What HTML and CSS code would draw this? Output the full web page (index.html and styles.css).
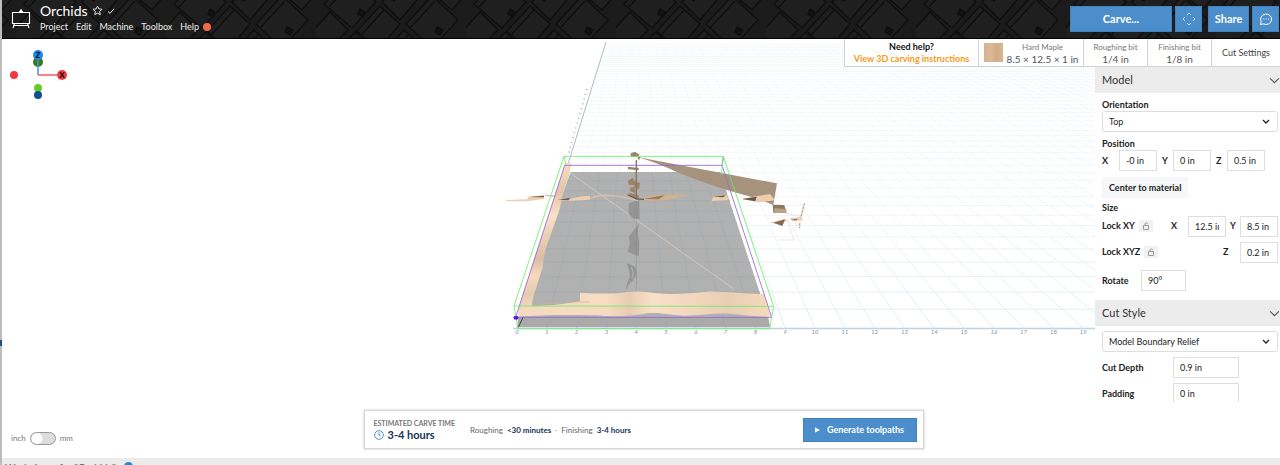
FILE: index.html
```html
<!DOCTYPE html>
<html lang="en">
<head>
<meta charset="utf-8">
<title>Orchids</title>
<link rel="stylesheet" href="styles.css">
</head>
<body>
<div class="rail"><span class="rail-mark"></span></div>
<div class="app">
  <header class="header">
    <svg class="header-pattern" aria-hidden="true">
      <defs>
        <pattern id="boards" width="150" height="104" patternUnits="userSpaceOnUse" patternTransform="translate(14 -18)">
          <rect width="150" height="104" fill="#1b1b1b"/>
          <g fill="#1f1f1f" stroke="#0e0e0e" stroke-width="1.6">
            <path d="M8 22 32-4 60 20 36 46zM41 49 64 24 84 42 62 68zM66 20 88-4 106 12 84 38zM90 42 116 14 142 38 116 66zM-6 52 14 30 32 48 10 70zM112 8 128-8 150 12 136 28zM14 74 40 50 60 72 34 98zM64 74 88 48 112 70 88 96z"/>
            <path d="M13 25 35 1M46 52 68 28M95 45 119 19M70 78 92 53M20 76 42 55" fill="none"/>
            <path d="M44 27l5 3-2 5-5-3zM121 45l6 3-3 5-5-3zM76 12l5 3-3 4-5-3z" fill="#111"/>
          </g>
        </pattern>
      </defs>
      <rect width="100%" height="100%" fill="url(#boards)"/>
    </svg>
    <svg class="logo" viewBox="0 0 20 20" fill="none" stroke="#fff" stroke-width="1.1" aria-hidden="true">
      <path d="M1.500 3.500h17v11h-17zM3.500 14.500 2 19M16.500 14.500 18 19M3 16.500h14"/><path d="M8.500 3 10 .8 11.500 3z" fill="#fff"/>
    </svg>
    <div class="project">
      <div class="title-row">
        <h1 class="title">Orchids</h1>
        <svg class="star" viewBox="0 0 10 10" fill="none" stroke="#fff" stroke-width=".8"><path d="M5 .9 6.200 3.500 9 3.900 7 5.900 7.500 8.800 5 7.400 2.500 8.800 3 5.900 1 3.900 3.800 3.500z"/></svg>
        <svg class="tick" viewBox="0 0 8 8" fill="none" stroke="#fff" stroke-width=".9"><path d="M1 4.400 3 6.300 7 1.800"/></svg>
      </div>
      <nav class="menu">
        <a href="#project">Project</a><a href="#edit">Edit</a><a href="#machine">Machine</a><a href="#toolbox">Toolbox</a><a href="#help" class="help">Help<span class="dot"></span></a>
      </nav>
    </div>
    <div class="actions">
      <button class="btn carve">Carve...</button>
      <button class="btn square jog" aria-label="Jog machine">
        <svg viewBox="0 0 14 14" fill="none" stroke="#c3e2f7" stroke-width="1"><path d="M5 3 7 1 9 3M5 11 7 13 9 11M3 5 1 7 3 9M11 5 13 7 11 9"/></svg>
      </button>
      <button class="btn share">Share</button>
      <button class="btn square" aria-label="Chat">
        <svg viewBox="0 0 14 14" fill="none" stroke="#fff" stroke-width="1"><path d="M1.500 12.500 2.200 9.600A5.500 5.200 0 1 1 4.600 11.900z"/><path d="M4.300 7h1M6.700 7h1M9.100 7h1" stroke-width="1.200"/></svg>
      </button>
    </div>
  </header>

  <main class="workspace">
    <svg class="scene" viewBox="2 39 1278 419" preserveAspectRatio="xMinYMin slice" aria-label="3D preview">
      <defs>
        <linearGradient id="fade" x1="0" y1="40" x2="0" y2="328" gradientUnits="userSpaceOnUse">
          <stop offset="0" stop-color="#fff" stop-opacity=".25"/><stop offset=".5" stop-color="#fff" stop-opacity=".45"/><stop offset="1" stop-color="#fff"/>
        </linearGradient>
        <mask id="depth" maskUnits="userSpaceOnUse" x="500" y="39" width="780" height="300"><rect x="500" y="39" width="780" height="300" fill="url(#fade)"/></mask>
        <linearGradient id="front" x1="0" x2="1">
          <stop offset="0" stop-color="#f5dac0"/><stop offset=".35" stop-color="#f7dcc2"/><stop offset=".44" stop-color="#e6ccb2"/><stop offset=".53" stop-color="#fae0c7"/><stop offset=".73" stop-color="#f0d5bb"/><stop offset=".83" stop-color="#e8ceb4"/><stop offset="1" stop-color="#f6dabd"/>
        </linearGradient>
        <linearGradient id="side" x1="0" y1="0" x2="0" y2="1">
          <stop offset="0" stop-color="#f9ddc2"/><stop offset=".2" stop-color="#e0c5aa"/><stop offset=".36" stop-color="#fbe0c6"/><stop offset=".66" stop-color="#d9bea5"/><stop offset=".77" stop-color="#f7dabb"/><stop offset=".9" stop-color="#e5cbb2"/><stop offset="1" stop-color="#f5d8bc"/>
        </linearGradient>
      </defs>
      <g id="grid" fill="none" stroke="#e2edf3" stroke-width="1" mask="url(#depth)"></g>
      <path d="M513 328.500H1095" stroke="#bfd3e2" stroke-width="1.500"/>
      <path d="M517 328 606 42" stroke="#9caabd" stroke-width=".8"/>
      <path d="M587 89 568 155" stroke="#9caabd" stroke-width="1.500" stroke-dasharray="1 4"/>
      <g id="ticks" class="tick-label"></g>
      <g transform="translate(500 140) scale(.33333)">
        <path d="M212 96H660L780 460 810 560H55L62 500z" fill="#b1b1b1"/>
        <path d="M55 532H805L810 562H52z" fill="#aaa"/>
        <g stroke="#a0acb0" stroke-width="2" fill="none">
          <path d="M200 123H670M190 152H680M178 182H690M165 214H700M155 247H710M142 288H724M130 326H736M115 367H750M100 410H764M85 456H780"/>
          <path d="M247 96 141 562M299 96 230 562M351 96 320 562M404 96 409 562M456 96 498 562M508 96 588 562M560 96 677 562M612 96 766 562"/>
        </g>
        <path d="M55 562 70 530" stroke="#39403f" stroke-width="3"/>
        <path d="M212 100 700 446" stroke="#d4c8bc" stroke-width="3"/>
        <g fill="#969595">
          <path d="M386 190 418 178 419 238 400 236 386 222zM418 250Q410 272 418 310L416 348Q400 345 382 334 394 315 386 290zM380 370Q398 375 406 382 416 400 398 422 386 430 376 452 382 424 390 412 390 392 380 370z"/>
          <path d="M394 382Q403 398 396 416" stroke="#aaa" stroke-width="5" fill="none"/>
        </g>
        <path d="M410 180V450" stroke="#808080" stroke-width="1.500" opacity=".6"/>
        <path d="M196 68 215 70 206 112Q185 160 180 205L150 290Q131 335 129 378L100 470 96 493 96 506 55 504z" fill="url(#side)"/>
        <path d="M55 500 Q170 498 240 484L240 458C300 462 350 462 380 456 410 452 440 455 470 460 530 466 580 458 620 455 680 453 740 464 792 462L812 530C770 532 730 524 690 521 640 518 600 528 550 527 500 524 480 516 440 520 400 528 340 532 290 526 200 524 120 524 55 530z" fill="url(#front)"/>
        <path d="M240 486 268 486M100 494 240 485" stroke="#cbb29a" stroke-width="2"/>
        <path d="M415 52 831 130 820 195Q790 182 766 174 640 142 532 97 480 72 415 52z" fill="#a6937d"/>
        <g fill="#9b8469">
          <path d="M392 40 405 35 419 44 412 51 392 50zM384 80 416 84 416 91 384 88zM384 122 398 113 406 126 420 128 418 145 410 150 402 136 386 134z"/>
          <path d="M412 52 422 50 417 61zM390 143 404 140 407 160 391 154zM386 158 416 166 416 177 393 170z"/>
        </g>
        <path d="M409 60V180" stroke="#8a735f" stroke-width="4"/>
        <path d="M13 180 83 178 83 170 132 166 132 177 80 184 25 184zM170 181 205 179Q230 168 270 168L270 179 215 182 180 184zM640 170 682 164 684 181 634 183zM724 176 810 162 825 181 775 187z" fill="#edceae"/>
        <path d="M86 171 132 167 132 172zM173 180 210 174 205 181zM726 177 770 170 766 184zM640 170 670 172 678 166z" fill="#6c584b"/>
        <path d="M270 175 310 166Q360 166 414 182M165 168 135 166M272 175Q300 160 330 168" stroke="#d6c0ad" stroke-width="4" fill="none"/>
        <path d="M414 180Q455 165 482 165L570 164 500 180 460 182z" fill="#d2b28f"/>
        <path d="M430 177 495 165 476 178z" fill="#9a7b5d"/>
        <path d="M382 164 410 177 432 178" stroke="#54483f" stroke-width="3" fill="none"/>
        <path d="M818 194 853 195 859 218 820 218z" fill="#8e7965"/>
        <path d="M822 205 859 207 859 218 824 218z" fill="#b9a288"/>
        <path d="M808 248 852 237 862 240 846 254zM868 235 905 231 908 241 878 244z" fill="#edcdaa"/>
        <path d="M820 248 855 238 847 258zM871 240 892 236 890 241z" fill="#806955"/>
        <path d="M857 220 905 230M862 240 882 300H835M880 240 890 258 900 264 900 238 913 190M905 230 914 200" stroke="#e4dad0" stroke-width="2" fill="none"/>
        <path d="M913 190 902 232M899 250V264" stroke="#b29173" stroke-width="3" stroke-dasharray="7 4"/>
        <path d="M47 532 194 76H666L815 532zM666 76 670 50" fill="none" stroke="#9a62e0" stroke-width="2.500"/>
        <path d="M42 498 192 49H670L821 499zM42 498 54 566H809L821 499M192 49 198 76M670 49 664 104" fill="none" stroke="#69ed68" stroke-width="2.500"/>
        <ellipse cx="48" cy="533" rx="8" ry="6" fill="#5518ee"/>
      </g>
    </svg>

    <div class="info-bar">
      <div class="info help-info"><strong>Need help?</strong><a href="#instructions">View 3D carving instructions</a></div>
      <div class="info material"><span class="swatch"></span><div class="stack"><span>Hard Maple</span><b>8.5 × 12.5 × 1 in</b></div></div>
      <div class="info bit"><span>Roughing bit</span><b>1/4 in</b></div>
      <div class="info bit"><span>Finishing bit</span><b>1/8 in</b></div>
      <button class="info settings">Cut Settings</button>
    </div>

    <div class="middle">
      <svg class="gizmo" viewBox="0 0 64 56" aria-label="View axes">
        <circle cx="30" cy="15" r="5" fill="#3c7a12"/>
        <path d="M30 28V8" stroke="#3b93e8" stroke-width="1.500"/><path d="M30 28H54" stroke="#f4595f" stroke-width="1.500"/>
        <circle cx="30" cy="8" r="5" fill="#1688f8"/><circle cx="54" cy="28" r="5" fill="#f33b40"/>
        <circle cx="6" cy="28" r="4" fill="#f5383d"/><circle cx="30" cy="41" r="4" fill="#66cc22"/><circle cx="30" cy="48" r="4" fill="#0d4f90"/>
        <text x="30" y="11">Z</text><text x="54" y="31">X</text>
      </svg>
      <aside class="panel">
        <button class="section">Model<svg class="chevron" viewBox="0 0 10 10"><path d="M1 3 5 7 9 3"/></svg></button>
        <div class="section-body">
          <label class="label" for="orientation">Orientation</label>
          <select id="orientation" class="field select"><option>Top</option></select>
          <div class="label position-label">Position</div>
          <div class="row">
            <label for="px">X</label><input id="px" class="field num" value="-0 in">
            <label for="py">Y</label><input id="py" class="field num" value="0 in">
            <label for="pz">Z</label><input id="pz" class="field num" value="0.5 in">
          </div>
          <button class="center-btn">Center to material</button>
          <div class="label">Size</div>
          <div class="row size-row">
            <span class="lock-label">Lock XY</span><button class="lock" aria-label="Lock XY"><svg viewBox="0 0 8 8"><path d="M1.500 3.500h5v4h-5zM3 3.500V2a1.400 1.400 0 0 1 2.700 0"/></svg></button>
            <label class="push" for="sx">X</label><input id="sx" class="field num" value="12.5 in">
            <label for="sy">Y</label><input id="sy" class="field num" value="8.5 in">
          </div>
          <div class="row size-row">
            <span class="lock-label">Lock XYZ</span><button class="lock" aria-label="Lock XYZ"><svg viewBox="0 0 8 8"><path d="M1.500 3.500h5v4h-5zM3 3.500V2a1.400 1.400 0 0 1 2.700 0"/></svg></button>
            <label class="push" for="sz">Z</label><input id="sz" class="field num" value="0.2 in">
          </div>
          <div class="row rotate-row"><label for="rot">Rotate</label><input id="rot" class="field" value="90°"></div>
        </div>
        <button class="section">Cut Style<svg class="chevron" viewBox="0 0 10 10"><path d="M1 3 5 7 9 3"/></svg></button>
        <div class="section-body style-body">
          <select class="field select" aria-label="Cut style"><option>Model Boundary Relief</option></select>
          <div class="row wide-row"><label for="depth-in">Cut Depth</label><input id="depth-in" class="field" value="0.9 in"></div>
          <div class="row wide-row"><label for="pad-in">Padding</label><input id="pad-in" class="field" value="0 in"></div>
        </div>
      </aside>
    </div>

    <div class="bottom">
      <label class="units"><span>inch</span><input type="checkbox" class="toggle" aria-label="Use millimetres"><span>mm</span></label>
      <section class="estimate">
        <div class="total">
          <div class="caption">ESTIMATED CARVE TIME</div>
          <div class="time"><svg class="clock" viewBox="0 0 10 10"><circle cx="5" cy="5" r="4.300"/><path d="M5 2.300V5L6.800 6.200"/></svg>3-4 hours</div>
        </div>
        <div class="parts"><span>Roughing</span><b>&lt;30 minutes</b><i>·</i><span>Finishing</span><b>3-4 hours</b></div>
        <button class="btn generate"><svg viewBox="0 0 6 6"><path d="M0 0 6 3 0 6z" fill="#fff"/></svg>Generate toolpaths</button>
      </section>
    </div>
  </main>
  <footer class="footer"><span>Workpieces for "Orchids"</span><span class="badge"></span></footer>
</div>
<script src="script.js"></script>
</body>
</html>
```
FILE: styles.css
```css
* { box-sizing: border-box; }
body { margin: 0; height: 100vh; display: flex; overflow: hidden; background: #fff; color: #222; font: 9px/12px Lato, "Open Sans", sans-serif; }
button, input, select { font: inherit; color: inherit; margin: 0; border: 0; border-radius: 0; background: none; padding: 0; }
a { color: inherit; text-decoration: none; }

.rail { flex: none; width: 2px; background: #bdbdbd; display: flex; flex-direction: column; padding-top: 340px; }
.rail-mark { height: 6px; background: #274b91; }
.app { flex: 1; min-width: 0; display: flex; flex-direction: column; }

.header { position: relative; flex: none; height: 39px; display: flex; align-items: center; gap: 9px; padding: 0 1px 0 9px; color: #fff; background: #1c1c1c; border-bottom: 1px solid #000; }
.header-pattern { position: absolute; inset: 0; width: 100%; height: 100%; }
.header > :not(.header-pattern) { position: relative; }
.logo { width: 20px; height: 20px; }
.title-row { display: flex; align-items: center; gap: 4px; height: 16px; }
.title { margin: 0; font-size: 14px; line-height: 16px; font-weight: 400; }
.star { width: 11px; height: 11px; }
.tick { width: 8px; height: 8px; }
.menu { display: flex; gap: 8px; height: 17px; align-items: center; color: #eee; }
.help { display: flex; align-items: center; gap: 4px; }
.dot { width: 8px; height: 8px; border-radius: 50%; background: #f26a48; }
.actions { margin-left: auto; display: flex; gap: 3px; }
.btn { height: 26px; background: #4b8ecb; color: #fff; font-weight: 700; display: flex; align-items: center; justify-content: center; border: 1px solid #4083bf; }
.carve { width: 102px; font-size: 11px; }
.share { width: 41px; font-size: 11px; }
.square { width: 27px; }
.square svg { width: 14px; height: 14px; }
.jog { margin-right: 3px; }

.workspace { position: relative; flex: 1; min-height: 0; display: flex; flex-direction: column; }
.scene { position: absolute; inset: 0; width: 100%; height: 100%; }
.tick-label { font-size: 6px; fill: #8095a8; text-anchor: middle; font-style: italic; }
.info-bar, .middle, .bottom { position: relative; }

.info-bar { align-self: flex-end; display: flex; height: 28px; background: #fff; border-bottom: 1px solid #d2d2d2; border-left: 1px solid #d2d2d2; color: #777; }
.info { display: flex; flex-direction: column; align-items: center; justify-content: center; border-right: 1px solid #d2d2d2; }
.info b { font-size: 10px; font-weight: 400; color: #555; }
.help-info { width: 134px; }
.help-info strong { color: #111; }
.help-info a { color: #f59b1c; font-weight: 700; }
.material, .bit { font-size: 8px; }
.material { width: 105px; flex-direction: row; gap: 4px; }
.swatch { width: 19px; height: 19px; background: linear-gradient(90deg, #d5b38d, #dcba95, #d1ac85, #d9b791); }
.stack { display: flex; flex-direction: column; align-items: center; }
.bit { width: 64px; }
.settings { width: 68px; border-right: 0; color: #444; }

.middle { flex: 1; min-height: 0; display: flex; justify-content: space-between; align-items: stretch; }
.gizmo { width: 64px; height: 56px; margin: -20px 0 0 6px; font: 700 8px Lato, sans-serif; text-anchor: middle; }
.panel { width: 185px; background: #fff; overflow: hidden; }
.section { width: 100%; height: 26px; padding: 0 0 0 7px; display: flex; align-items: center; justify-content: space-between; background: #ececec; font-size: 11px; color: #333; }
.chevron { width: 11px; height: 11px; fill: none; stroke: #555; stroke-width: 1; }
.section-body { padding: 6px 2px 9px 7px; }
.label, .row label, .lock-label { display: block; font-weight: 700; }
.field { height: 21px; border: 1px solid #dedede; padding: 0 6px; background: #fff; min-width: 0; }
.select { width: 100%; display: block; border-radius: 3px; appearance: none; background: #fff url("data:image/svg+xml,%3Csvg xmlns='http://www.w3.org/2000/svg' width='8' height='8' fill='none' stroke='%23222' stroke-width='1.3'%3E%3Cpath d='M1 2l3 3 3-3'/%3E%3C/svg%3E") no-repeat right 7px center; }
.position-label { margin-top: 6px; }
.row { display: flex; align-items: center; gap: 5px; }
.row > label { width: 6px; }
.num { width: 38px; }
.row > label:first-child { width: 12px; }
.center-btn { display: block; height: 21px; margin: 6px 0 4px; padding: 0 7px; background: #f6f7f9; font-weight: 700; }
.size-row { height: 24px; margin-bottom: 2px; gap: 4px; }
.lock { width: 14px; height: 12px; background: #f1f1f1; display: grid; place-items: center; }
.lock svg { width: 8px; height: 8px; fill: none; stroke: #999; stroke-width: 1; }
.push { margin-left: auto; }
.row > .push { width: 13px; }
.rotate-row { margin-top: 6px; }
.row.rotate-row label { width: 34px; }
.rotate-row .field { width: 45px; }
.style-body { padding: 5px 2px 0 7px; }
.wide-row { margin-top: 5px; }
.row.wide-row label { width: 66px; }
.wide-row .field { width: 66px; }

.bottom { flex: none; height: 56px; display: grid; grid-template-columns: 1fr minmax(0, 560px) 1fr; padding: 8px 0 8px 5px; }
.units { display: flex; align-items: center; gap: 4px; margin-left: 4px; align-self: end; height: 24px; font-size: 8px; color: #777; }
.toggle { appearance: none; width: 26px; height: 13px; border: 1px solid #999; border-radius: 7px; background: radial-gradient(circle at 6px 50%, #fff 5px, #ddd 6px); }
.estimate { display: flex; align-items: center; gap: 15px; height: 39px; padding: 0 6px 0 9px; background: #fff; border: 1px solid #d5d8da; box-shadow: 0 0 2px #bbb; }
.caption { font-size: 7px; line-height: 10px; font-weight: 700; color: #777; }
.time { display: flex; align-items: center; gap: 4px; font-size: 11px; line-height: 14px; font-weight: 700; color: #173458; }
.clock { width: 10px; height: 10px; fill: none; stroke: #4c91d0; stroke-width: 1; }
.parts { display: flex; gap: 4px; font-size: 8px; color: #666; }
.parts b { color: #173458; }
.parts i { color: #999; }
.generate { height: 24px; width: 114px; margin-left: auto; gap: 7px; }
.generate svg { width: 5px; height: 6px; }

.footer { flex: none; height: 7px; overflow: hidden; background: #ebebeb; display: flex; align-items: flex-start; gap: 8px; padding: 3px 3px 0; font-size: 10px; color: #555; }
.badge { width: 9px; height: 9px; margin-top: 1px; border-radius: 50%; background: #2a87d0; }
```
FILE: script.js
```js
const NS = "http://www.w3.org/2000/svg";
const base = 328, originX = 517, step = 29.8, vanishX = 640, depth = 395;
const grid = document.getElementById("grid");
const ticks = document.getElementById("ticks");
const far = (base - 42) / depth;
let d = "";
// lines running away from the viewer
for (let i = 1; i < 60; i++) {
  const x = originX + i * step;
  d += `M${x} ${base}L${x + (vanishX - x) * far} 42`;
}
// lines parallel to the front edge
for (let i = 1; i < 52; i++) {
  const t = 1 - 1 / (1 + 0.05 * i);
  const y = base - depth * t;
  d += `M${originX + (vanishX - originX) * t} ${y}H1280`;
}
const path = document.createElementNS(NS, "path");
path.setAttribute("d", d);
grid.append(path);

for (let i = 0; i < 20; i++) {
  const label = document.createElementNS(NS, "text");
  label.setAttribute("x", originX + i * step);
  label.setAttribute("y", base + 6);
  label.textContent = i;
  ticks.append(label);
}
```
